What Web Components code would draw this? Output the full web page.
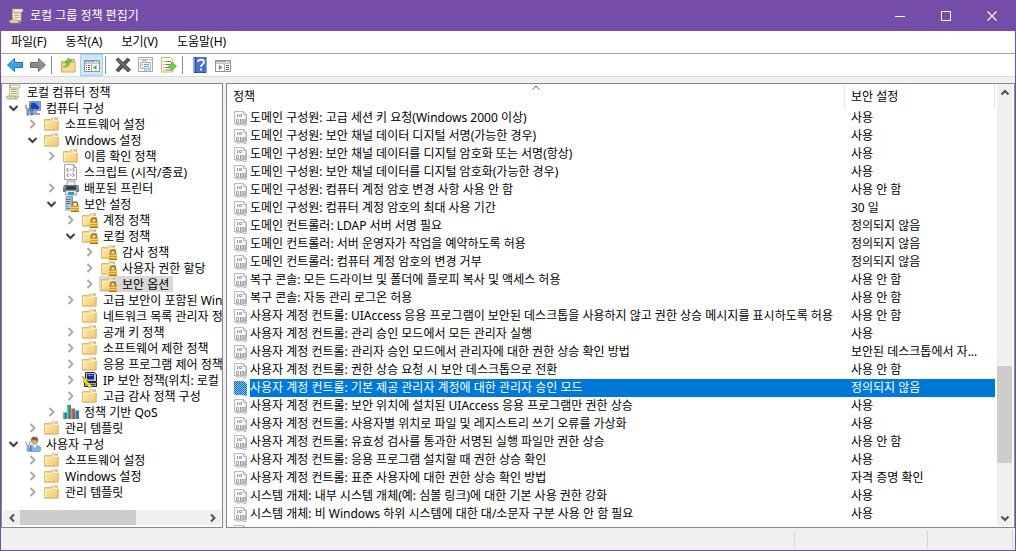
<!DOCTYPE html>
<html lang="ko">
<head>
<meta charset="utf-8">
<title>로컬 그룹 정책 편집기</title>
<style>
html,body{margin:0;height:100%}
body{font:12px/16px "Noto Sans","Noto Sans CJK KR",sans-serif;color:#000;background:#f0f0f0}
</style>
</head>
<body>
<gp-window>
  <title-bar slot="title">로컬 그룹 정책 편집기</title-bar>
  <menu-bar slot="menu"></menu-bar>
  <tool-bar slot="tools"></tool-bar>
  <policy-tree slot="tree">
    <tree-item level="0" icon="scroll">로컬 컴퓨터 정책</tree-item>
    <tree-item level="1" icon="computer" state="open">컴퓨터 구성</tree-item>
    <tree-item level="2" icon="folder" state="closed">소프트웨어 설정</tree-item>
    <tree-item level="2" icon="folder" state="open">Windows 설정</tree-item>
    <tree-item level="3" icon="folder" state="closed">이름 확인 정책</tree-item>
    <tree-item level="3" icon="script">스크립트 (시작/종료)</tree-item>
    <tree-item level="3" icon="printer" state="closed">배포된 프린터</tree-item>
    <tree-item level="3" icon="server" state="open">보안 설정</tree-item>
    <tree-item level="4" icon="locked" state="closed">계정 정책</tree-item>
    <tree-item level="4" icon="locked" state="open">로컬 정책</tree-item>
    <tree-item level="5" icon="locked" state="closed">감사 정책</tree-item>
    <tree-item level="5" icon="locked" state="closed">사용자 권한 할당</tree-item>
    <tree-item level="5" icon="locked" state="closed" selected>보안 옵션</tree-item>
    <tree-item level="4" icon="folder" state="closed">고급 보안이 포함된 Win</tree-item>
    <tree-item level="4" icon="folder">네트워크 목록 관리자 정</tree-item>
    <tree-item level="4" icon="folder" state="closed">공개 키 정책</tree-item>
    <tree-item level="4" icon="folder" state="closed">소프트웨어 제한 정책</tree-item>
    <tree-item level="4" icon="folder" state="closed">응용 프로그램 제어 정책</tree-item>
    <tree-item level="4" icon="ipsec" state="closed">IP 보안 정책(위치: 로컬</tree-item>
    <tree-item level="4" icon="folder" state="closed">고급 감사 정책 구성</tree-item>
    <tree-item level="3" icon="qos" state="closed">정책 기반 QoS</tree-item>
    <tree-item level="2" icon="folder" state="closed">관리 템플릿</tree-item>
    <tree-item level="1" icon="user" state="open">사용자 구성</tree-item>
    <tree-item level="2" icon="folder" state="closed">소프트웨어 설정</tree-item>
    <tree-item level="2" icon="folder" state="closed">Windows 설정</tree-item>
    <tree-item level="2" icon="folder" state="closed">관리 템플릿</tree-item>
  </policy-tree>
  <policy-list slot="list"></policy-list>
  <status-bar slot="status"></status-bar>
</gp-window>

<script>
const folder = `<linearGradient id="f" x2="1" y2="1"><stop stop-color="#ffe9ac"/><stop offset="1" stop-color="#f0c970"/></linearGradient>
<path d="M.5 3.500h6l2-2h5v3h.5v9.500h-13.500z" fill="#f3d083" stroke="#dcb970"/><path d="M9 1.500h4v2H9z" fill="#fff"/><path d="M10 2h3v1.500h-3z" fill="#a9c8d8"/>
<path d="M1 5h6.500l1-1H14v10H1z" fill="url(#f)"/><path d="M1.500 13V5.500h6l1-1H14" fill="none" stroke="#fff0c4"/><path d="M.5 14h13.500V5" fill="none" stroke="#d9b566"/>`;
const lock = `<path d="M9.500 10V8.500a2.500 2.500 0 0 1 5 0V10" fill="none" stroke="#8c7433" stroke-width="1.500"/><path d="M8 9.500h8V16H8z" fill="#d99f22"/><path d="M8 11.500h8M8 13.500h8" stroke="#f2cf63"/><path d="M8 15.500h8" stroke="#a97713"/>`;
const scroll = `<path d="M3.500 2h8.500v11H3.500z" fill="#f5eecb" stroke="#b3a985" stroke-width=".8"/><path d="M3 1h9.500c2 0 2 3 .2 3H4.500C4.500 2.500 4 2 3 1z" fill="#fffbe4" stroke="#9d9474" stroke-width=".8"/><path d="M1.200 12h8.300c-.5 2 1 3 1 3H2c-1.500 0-2-2-.8-3z" fill="#e8ddb0" stroke="#9d9474" stroke-width=".8"/><path d="M10.500 15c1.500 0 1.500-1.500 1.500-3" fill="none" stroke="#9d9474" stroke-width=".8"/><path d="M5 5.500h5.500M5 7.500h5.500M5 9.500h5.500" stroke="#a5a394" stroke-width=".9"/>`;
const windowGlyph = `<path d="M.5 3.500h15v11H.5z" fill="#fff" stroke="#8d9299"/><path d="M1 4h14v1.500H1z" fill="#a4abb3"/><path d="M11 4h1v1h-1zM13 4h1v1h-1z" fill="#fff"/><path d="M1 6.500h14" stroke="#c2c7cd"/>`;
const ICONS = {
 scroll, folder,
 locked: folder + lock,
 computer: `<path d="M4.500 1.500h11v9h-11z" fill="#dfe6ee" stroke="#8290a5"/><path d="M5.500 2.500h9v7h-9z" fill="#173fc0"/><path d="M10 2.500h4.500v5z" fill="#6f9cf4"/><path d="M8 11h4v2H8zM6 13h9v2H6z" fill="#9ba5b4"/><path d="M1 5v3l1.200 1v6h1.600V9L5 8V5" fill="none" stroke="#6b7786" stroke-width="1.200"/><path d="M5.500 8.500h2V15h-2z" fill="#3b9be2" stroke="#1c629e" stroke-width=".6"/>`,
 script: `<path d="M1.500.5h9l3 3v12h-12z" fill="#fff" stroke="#a0a3a7"/><path d="M10.500.5v3h3" fill="none" stroke="#a0a3a7"/><path d="M5.500 4.500q-1.500 0-1.500 1.500t1.500 1.500M9.500 4.500Q11 4.500 11 6T9.500 7.500M5.500 9.500Q4 9.500 4 11t1.500 1.500M9.500 9.500q1.500 0 1.500 1.500t-1.500 1.500M6.500 6h2M6.500 11h2" fill="none" stroke="#777c82"/>`,
 printer: `<path d="M4 1h8v5H4z" fill="#e8edf1" stroke="#9aa0a6"/><path d="M1 5h14l1 2v5H0V7z" fill="#70767c"/><path d="M0 7.500h16" stroke="#a2a8ae"/><path d="M3 6.500h10v3H3z" fill="#303539"/><path d="M3 10.500h10l1 4.500H2z" fill="#d9edf6" stroke="#6f8a98" stroke-width=".7"/><path d="M5 12h6v3H5z" fill="#2f98ca"/><path d="M13 9h2v1h-2z" fill="#70d455"/>`,
 server: `<path d="M2 1.500L4 0h6v13l-2 2H2z" fill="#8c99a7"/><path d="M2 1.500h6.500V15H2z" fill="#bdc8d3"/><path d="M3 3.500h4.500M3 5.500h4.500M3 7.500h4.500" stroke="#516b83"/><path d="M3 9h2v2H3z" fill="#5cbaf1"/><path d="M3 12.500h4.500" stroke="#768798"/>` + lock,
 ipsec: `<path d="M3.500.5h9l2 2v7h-11z" fill="#c6c7cf" stroke="#222"/><path d="M5 2h7v5.500H5z" fill="#1b2299"/><path d="M6 3h5v1H6z" fill="#748aff"/><path d="M2.500 10.500h12v4h-12z" fill="#aaa9b3" stroke="#222"/><path d="M9 12.500h4" stroke="#444"/><path d="M.5 4l2 3 2-1.500 1 1.500-1 2 3 2.500 2.500 3.500-3 .5-3-4-3-1.500 1-2z" fill="#ffea1b" stroke="#8e7900" stroke-width=".6"/>`,
 qos: `<path d="M0 8.500h3.500V15H0z" fill="#238fd1"/><path d="M4 1h3.500v14H4z" fill="#26ad68"/><path d="M8 4.500h3.500V15H8z" fill="#dc5341"/><path d="M12 6.500h3.500V15H12z" fill="#2082c4"/><path d="M.7 9v6M4.700 1.500V15M8.700 5V15M12.700 7V15" stroke="#ffffff66"/><path d="M3.200 8.500V15M7.200 1v14M11.200 4.500V15M15.200 6.500V15" stroke="#264c5c" stroke-width=".8"/>`,
 user: `<path d="M4 15c0-4 2-6 6-6s6 2 6 5l-1 1.500H4z" fill="#7fb8e8" stroke="#5c94c2" stroke-width=".6"/><path d="M8 9l2 3 2-3z" fill="#fff"/><circle cx="9.500" cy="5.500" r="3.300" fill="#dba77d"/><path d="M6 5c-.5-4 2.500-5 5-4 2.500.5 2.500 3 1.500 5-1-2-3-3-6.500-1z" fill="#7b6252"/><path d="M1 5.500v2l1.200 1V15h1.600V8.500L5 7.500v-2" fill="none" stroke="#728391"/><path d="M5 9h1.500v6H5z" fill="#3386c6"/>`,
 item: `<path d="M.5 1.500h9l3 3v9H.5z" fill="#fff" stroke="#b5b8bc"/><path d="M9.500 1.500v3h3" fill="none" stroke="#b5b8bc"/><path d="M1 13.500l1.500 1.500h3l1.500-1 2 1 3 .5V5" fill="none" stroke="#aaadb1"/><path d="M3.500 4v3M6.500 9v4M11 9v4" stroke="#9095a0"/><path d="M5.500 4.500h2v2h-2zM2.500 9.500h2v3h-2zM8 9.500h1.500v3H8z" fill="none" stroke="#999da8"/>`,
 itemSelected: `<pattern id="p" width="2" height="2" patternUnits="userSpaceOnUse"><path d="M0 0h1v1H0zM1 1h1v1H1z" fill="#0078d7"/></pattern><path d="M0 1h10l3 3v12l-4-1H2l-2-1z" fill="#8fb9dc"/><path d="M0 1h10l3 3v12l-4-1H2l-2-1z" fill="url(#p)"/>`,
 back: `<linearGradient id="b" y2="1" x2="0"><stop stop-color="#8ad5fa"/><stop offset=".5" stop-color="#26a0e7"/><stop offset="1" stop-color="#54c1f2"/></linearGradient><path d="M.5 8l7-6.500v4h8v5h-8v4z" fill="url(#b)" stroke="#27719f" stroke-linejoin="round"/>`,
 forward: `<linearGradient id="g" y2="1" x2="0"><stop stop-color="#b9b9b9"/><stop offset=".5" stop-color="#858585"/><stop offset="1" stop-color="#aaa"/></linearGradient><path d="M15.500 8l-7-6.500v4h-8v5h8v4z" fill="url(#g)" stroke="#6b6b6b" stroke-linejoin="round"/>`,
 up: `<path d="M.5 4.500h6l1.500-2h5.500v3h.5v9.500H.5z" fill="#eac26b" stroke="#cda657"/><path d="M1 7h6.500l1-1H13.500v8.500H1z" fill="#f9d98c"/><path d="M10 3h3v1h-3z" fill="#b5dbe9"/><path d="M2 9.500c3.500.2 4-2 3.800-4.500H4L7.500 1 11 4.500H8.500C8.500 8.500 6 11 2 9.500z" fill="#6bd044" stroke="#4a9a2b" stroke-width=".6"/>`,
 treePane: windowGlyph + `<path d="M7.500 7v7" stroke="#a5adb5"/><path d="M2 8.500h1M4 8.500h2M2 10.500h1M4 10.500h2M2 12.500h1M4 12.500h2" stroke="#56606b"/><path d="M12.500 8v5L9 10.500z" fill="#3cac35"/>`,
 actionPane: windowGlyph + `<path d="M9.500 7v7" stroke="#a5adb5"/><path d="M11 8.500h3M11 10.500h3M11 12.500h3" stroke="#56606b"/><path d="M4 8v5l3.500-2.500z" fill="#3cac35"/>`,
 remove: `<path d="M1 2.500L3.500 1 8 5.500 12.500 1 15 3l-4.500 4.800 5 4.700L13 15l-5-4.500L3.500 15 1 13l4.500-5.200z" fill="#585858" stroke="#333" stroke-width=".7"/><path d="M3 2.700l10 10" stroke="#858585"/>`,
 properties: `<path d="M.5.5h14v14H.5z" fill="#fafbfc" stroke="#a3a9af"/><path d="M2 2.500h8" stroke="#b2b9c0"/><path d="M11 2.500h1M13 2.500h1" stroke="#7d93aa"/><path d="M2.500 5.500h10v6h-10zM4.500 5V3.500H8V5" fill="#f2f8fc" stroke="#a9b4bd"/><path d="M4 7.500h1M6 7.500h5M4 9.500h1M6 9.500h5" stroke="#76a3c4"/><path d="M6 13h3M10 13h3" stroke="#39abd7"/>`,
 export: `<path d="M.5.5h9l2.500 2.500v12H.5z" fill="#fffbe2" stroke="#bdb493"/><path d="M2.500 4.500h1M4.500 4.500H10M2.500 7.500h1M4.500 7.500H8M2.500 10.500h1M4.500 10.500H8M2.500 13h1M4.500 13H10" stroke="#777"/><path d="M8 7.500h2.500V5l5 4.200-5 4.300V11H8z" fill="#72d34b" stroke="#4ba52e" stroke-width=".7"/>`,
 help: `<path d="M1.500 0h13v16h-13z" fill="#2c4da8"/><path d="M4 0h10v15H4z" fill="#4a6fd0"/><path d="M2.500 1v14" stroke="#7f99da"/><path d="M6 5C6 2 12 2 12 5c0 2.500-3 2-3 5M9 11.500v2" fill="none" stroke="#fff" stroke-width="1.800"/>`,
 chevronOpen: `<path d="M3.500 6l4 4 4-4" fill="none" stroke="#404040" stroke-width="2"/>`,
 chevronClosed: `<path d="M5.500 4l4 4-4 4" fill="none" stroke="#a6a6a6" stroke-width="1.800"/>`,
 arrowUp: `<path d="M4.500 9.500L8 6l3.500 3.500" fill="none" stroke="#505050" stroke-width="2"/>`,
 arrowDown: `<path d="M4.500 6.500L8 10l3.500-3.500" fill="none" stroke="#505050" stroke-width="2"/>`,
 arrowLeft: `<path d="M10 4.500L6.500 8l3.500 3.500" fill="none" stroke="#505050" stroke-width="2"/>`,
 arrowRight: `<path d="M6 4.500L9.500 8 6 11.500" fill="none" stroke="#505050" stroke-width="2"/>`,
 sort: `<path d="M4.500 9.500L8 6l3.500 3.500" fill="none" stroke="#606060"/>`,
 minimize: `<path d="M3 8.500h10" stroke="#fff"/>`,
 maximize: `<path d="M3.500 3.500h9v9h-9z" fill="none" stroke="#fff"/>`,
 close: `<path d="M3.500 3.500l9 9M12.500 3.500l-9 9" stroke="#fff" stroke-width="1.200"/>`
};

const define = (name, html, setup) => customElements.define(name, class extends HTMLElement {
  constructor() {
    super();
    this.attachShadow({mode: 'open'});
  }
  connectedCallback() {
    const t = document.createElement('template');
    t.innerHTML = typeof html === 'function' ? html(this) : html;
    this.shadowRoot.replaceChildren(t.content.cloneNode(true));
    if (setup) setup(this);
  }
});
const icon = name => `<mmc-icon name="${name}"></mmc-icon>`;
const reset = `*{box-sizing:border-box}button{margin:0;padding:0;border:0;background:none;font:inherit;color:inherit;display:flex;align-items:center;justify-content:center}`;

define('mmc-icon', el => `<style>:host{display:block;flex:none;width:16px;height:16px}svg{display:block;width:100%;height:100%}</style>
<svg viewBox="0 0 16 16" aria-hidden="true">${ICONS[el.getAttribute('name')]}</svg>`);

define('gp-window', `<style>
:host{display:flex;flex-direction:column;height:100vh;box-sizing:border-box;border:1px solid #744da9;border-top:0;overflow:hidden}
.panes{flex:1;min-height:0;display:grid;grid-template-columns:222px minmax(0,1fr);gap:3px;padding-top:6px}
</style><slot name="title"></slot><slot name="menu"></slot><slot name="tools"></slot>
<div class="panes"><slot name="tree"></slot><slot name="list"></slot></div><slot name="status"></slot>`);

define('title-bar', `<style>${reset}
:host{display:flex;align-items:center;height:31px;background:#744da9;color:#fff;padding-left:8px}
h1{flex:1;margin:0 0 0 5px;font:inherit}
button{width:46px;height:31px}
</style>${icon('scroll')}<h1><slot></slot></h1>
<button aria-label="최소화">${icon('minimize')}</button><button aria-label="최대화">${icon('maximize')}</button><button aria-label="닫기">${icon('close')}</button>`);

define('menu-bar', `<style>${reset}
:host{display:block;background:#fff;border-bottom:1px solid #a6a6a6}
nav{display:flex;gap:3px;height:22px;padding-left:2px}
button{padding:0 8px}
</style><nav><button>파일(F)</button><button>동작(A)</button><button>보기(V)</button><button>도움말(H)</button></nav>`);

define('tool-bar', `<style>${reset}
:host{display:flex;align-items:center;height:23px;box-sizing:border-box;background:#fff;border-bottom:1px solid #dadada;padding-left:2px}
button{width:23px;height:22px;border:1px solid transparent}
button[aria-pressed=true]{background:#cce8ff;border-color:#99d1ff}
i{width:8px;height:18px;display:flex;padding-left:2px}
i::before{content:"";width:1px;background:#8c8c8c}
</style>
<button aria-label="뒤로">${icon('back')}</button><button aria-label="앞으로">${icon('forward')}</button><i></i>
<button aria-label="한 수준 위로">${icon('up')}</button><button aria-label="콘솔 트리 표시" aria-pressed="true">${icon('treePane')}</button><i></i>
<button aria-label="삭제">${icon('remove')}</button><button aria-label="속성">${icon('properties')}</button><button aria-label="목록 내보내기">${icon('export')}</button><i></i>
<button aria-label="도움말">${icon('help')}</button><button aria-label="작업 창 표시">${icon('actionPane')}</button>`);

define('scroll-bar', el => { const v = el.hasAttribute('vertical'); return `<style>${reset}
:host{display:flex;flex-direction:${v ? 'column' : 'row'};background:#f0f0f0;${v ? 'width' : 'height'}:15px}
button{flex:none;${v ? 'height' : 'width'}:17px;${v ? 'width' : 'height'}:15px}
.track{flex:1;min-height:0;display:flex;flex-direction:inherit}
.before{flex:var(--before)}.thumb{flex:var(--thumb);background:#cdcdcd}.after{flex:var(--after)}
</style><button aria-label="이전">${icon(v ? 'arrowUp' : 'arrowLeft')}</button>
<div class="track"><div class="before"></div><div class="thumb"></div><div class="after"></div></div>
<button aria-label="다음">${icon(v ? 'arrowDown' : 'arrowRight')}</button>`; });

define('policy-tree', `<style>
:host{display:flex;flex-direction:column;min-width:0;background:#fff;border:1px solid #828790;box-sizing:border-box;overflow:hidden}
.items{flex:1;min-height:0;overflow:hidden}
scroll-bar{--before:0;--thumb:117;--after:68;margin:0 1px 2px}
</style><div class="items" role="tree"><slot></slot></div><scroll-bar></scroll-bar>`);

define('tree-item', el => { const l = +el.getAttribute('level'), s = el.getAttribute('state'); return `<style>
:host{display:flex;height:16px;line-height:18px;white-space:nowrap;padding-left:${l ? 2 + (l - 1) * 19 : 2}px}
.twisty{flex:none;width:19px;display:${l ? 'flex' : 'none'};justify-content:center}
.label{display:flex;gap:5px;padding:0 4px 0 2px}
:host([selected]) .label{background:#d9d9d9}
</style><span class="twisty">${s ? icon(s === 'open' ? 'chevronOpen' : 'chevronClosed') : ''}</span>
<span class="label">${icon(el.getAttribute('icon'))}<span><slot></slot></span></span>`; },
el => el.setAttribute('role', 'treeitem'));

const U = '사용자 계정 컨트롤: ';
const POLICIES = [
 ['도메인 구성원: 고급 세션 키 요청(Windows 2000 이상)', '사용'],
 ['도메인 구성원: 보안 채널 데이터 디지털 서명(가능한 경우)', '사용'],
 ['도메인 구성원: 보안 채널 데이터를 디지털 암호화 또는 서명(항상)', '사용'],
 ['도메인 구성원: 보안 채널 데이터를 디지털 암호화(가능한 경우)', '사용'],
 ['도메인 구성원: 컴퓨터 계정 암호 변경 사항 사용 안 함', '사용 안 함'],
 ['도메인 구성원: 컴퓨터 계정 암호의 최대 사용 기간', '30 일'],
 ['도메인 컨트롤러: LDAP 서버 서명 필요', '정의되지 않음'],
 ['도메인 컨트롤러: 서버 운영자가 작업을 예약하도록 허용', '정의되지 않음'],
 ['도메인 컨트롤러: 컴퓨터 계정 암호의 변경 거부', '정의되지 않음'],
 ['복구 콘솔: 모든 드라이브 및 폴더에 플로피 복사 및 액세스 허용', '사용 안 함'],
 ['복구 콘솔: 자동 관리 로그온 허용', '사용 안 함'],
 [U + 'UIAccess 응용 프로그램이 보안된 데스크톱을 사용하지 않고 권한 상승 메시지를 표시하도록 허용', '사용 안 함'],
 [U + '관리 승인 모드에서 모든 관리자 실행', '사용'],
 [U + '관리자 승인 모드에서 관리자에 대한 권한 상승 확인 방법', '보안된 데스크톱에서 자...'],
 [U + '권한 상승 요청 시 보안 데스크톱으로 전환', '사용 안 함'],
 [U + '기본 제공 관리자 계정에 대한 관리자 승인 모드', '정의되지 않음', true],
 [U + '보안 위치에 설치된 UIAccess 응용 프로그램만 권한 상승', '사용'],
 [U + '사용자별 위치로 파일 및 레지스트리 쓰기 오류를 가상화', '사용'],
 [U + '유효성 검사를 통과한 서명된 실행 파일만 권한 상승', '사용 안 함'],
 [U + '응용 프로그램 설치할 때 권한 상승 확인', '사용'],
 [U + '표준 사용자에 대한 권한 상승 확인 방법', '자격 증명 확인'],
 ['시스템 개체: 내부 시스템 개체(예: 심볼 링크)에 대한 기본 사용 권한 강화', '사용'],
 ['시스템 개체: 비 Windows 하위 시스템에 대한 대/소문자 구분 사용 안 함 필요', '사용'],
 ['', '']
];
define('policy-list', `<style>${reset}
:host{display:flex;min-width:0;min-height:0;background:#fff;border:1px solid #828790;box-sizing:border-box;overflow:hidden;position:relative}
.view{flex:1;min-width:0;overflow:hidden;margin-right:2px}
table{width:100%;border-collapse:separate;border-spacing:0;table-layout:fixed}
th{height:25px;padding:1px 6px 0;text-align:left;font-weight:400;border-right:1px solid #e5e5e5}
th:last-child{width:150px}
td{height:18px;padding:0 6px;white-space:nowrap;overflow:hidden}
td:first-child{padding:0}
.cell{display:flex;align-items:center;height:18px}
.cell mmc-icon{margin:0 0 0 7px}
.cell span{flex:1;height:18px;line-height:18px}
.selected span,.selected td:last-child{background:#0078d7;color:#fff}
.sort{position:absolute;left:301px;top:-4px}
scroll-bar{--before:265;--thumb:97;--after:46;margin:0 2px 1px 0}
</style><div class="view"><table><thead><tr><th scope="col">정책</th><th scope="col">보안 설정</th></tr></thead><tbody>
${POLICIES.map(([p, v, sel]) => `<tr${sel ? ' class="selected"' : ''}><td><div class="cell">${icon(sel ? 'itemSelected' : 'item')}<span>${p}</span></div></td><td>${v}</td></tr>`).join('')}
</tbody></table></div><mmc-icon class="sort" name="sort"></mmc-icon><scroll-bar vertical></scroll-bar>`);

define('status-bar', `<style>
:host{display:grid;grid-template-columns:minmax(0,1fr) 133px 85px;height:22px;box-sizing:border-box;padding:2px 2px 1px 0;background:#f0f0f0}
span{border-right:1px solid #d7d7d7}
</style><span></span><span></span><span></span>`);
</script>
</body>
</html>
